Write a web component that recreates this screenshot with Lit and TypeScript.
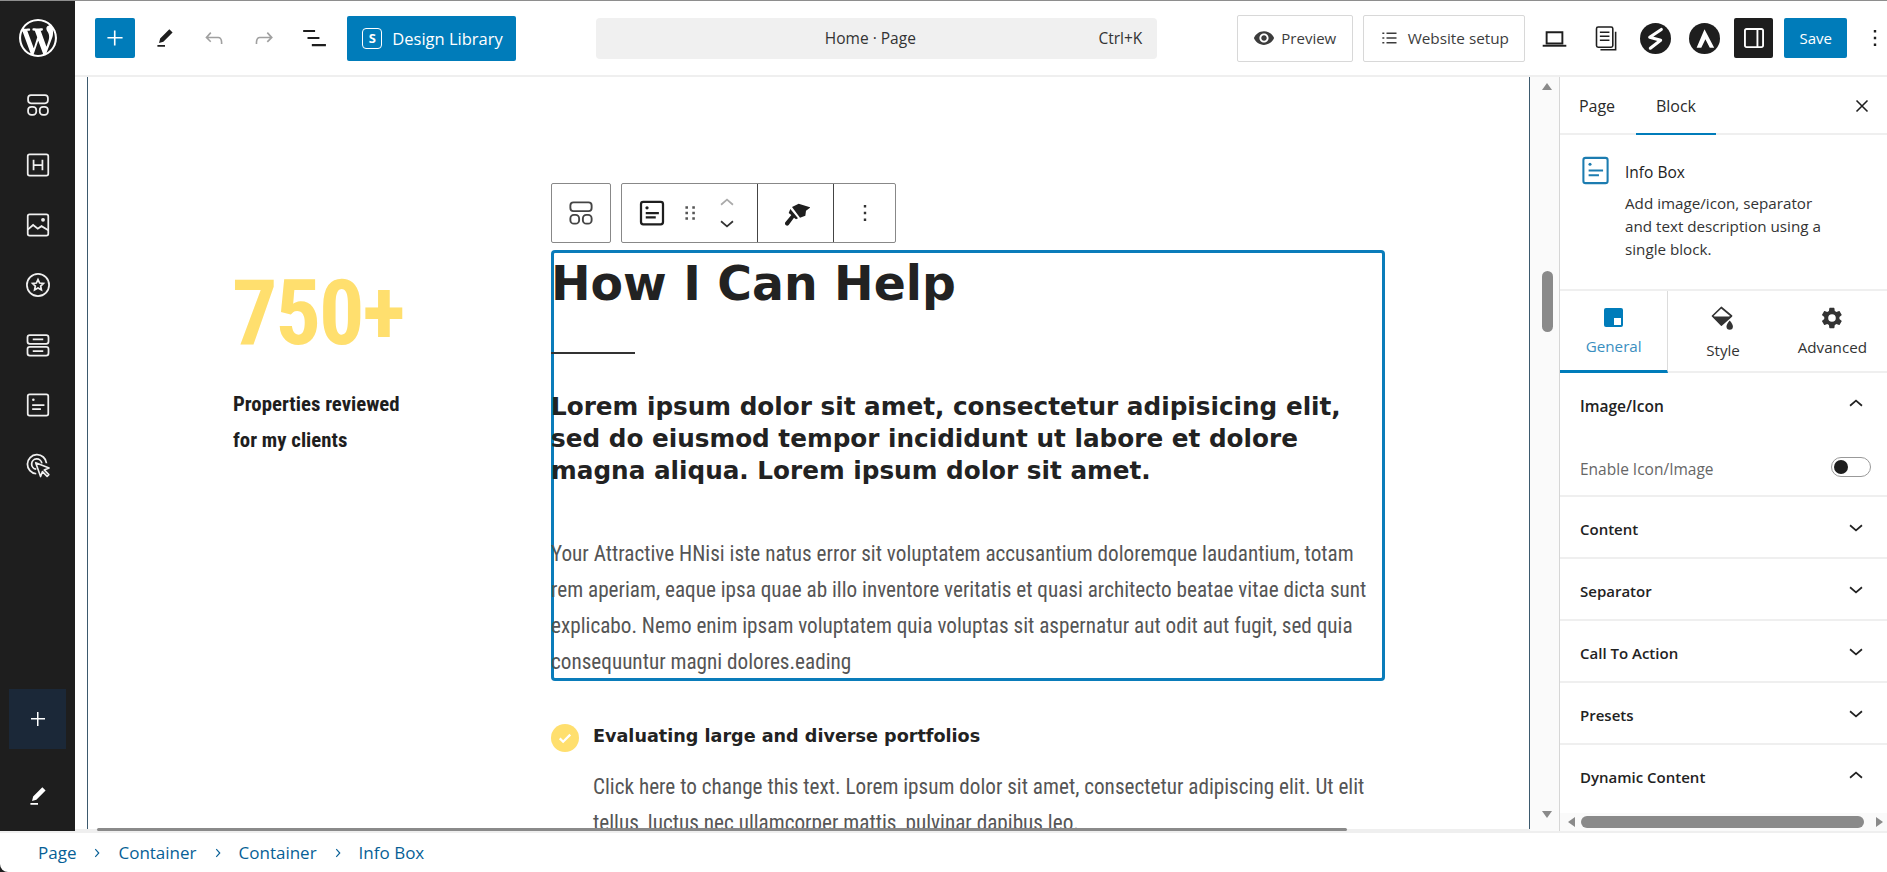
import { LitElement, html, css, svg } from "lit";
import { customElement } from "lit/decorators.js";

const ic = (size: number, content: unknown, vb = "0 0 24 24") =>
  html`<svg width=${size} height=${size} viewBox=${vb} fill="currentColor" aria-hidden="true">${content}</svg>`;

const WP = "M20 10c0-5.51-4.49-10-10-10C4.48 0 0 4.49 0 10c0 5.52 4.48 10 10 10 5.51 0 10-4.48 10-10zM7.78 15.37L4.37 6.22c.55-.02 1.17-.08 1.17-.08.5-.06.44-1.13-.06-1.11 0 0-1.45.11-2.37.11-.18 0-.37 0-.58-.01C4.12 2.69 6.87 1.11 10 1.11c2.33 0 4.45.87 6.05 2.34-.68-.11-1.65.39-1.65 1.58 0 .74.45 1.36.9 2.1.35.61.55 1.36.55 2.46 0 1.49-1.4 5-1.4 5l-3.03-8.37c.54-.02.82-.17.82-.17.5-.05.44-1.25-.06-1.22 0 0-1.44.12-2.38.12-.87 0-2.33-.12-2.33-.12-.5-.03-.56 1.2-.06 1.22l.92.08 1.26 3.41zM17.41 10c.24-.64.74-1.87.43-4.25.7 1.29 1.05 2.71 1.05 4.25 0 3.29-1.73 6.24-4.4 7.78.97-2.59 1.94-5.2 2.92-7.78zM6.1 18.09C3.12 16.65 1.11 13.53 1.11 10c0-1.3.23-2.48.72-3.59C3.25 10.3 4.67 14.2 6.1 18.09zm4.03-6.63l2.58 6.98c-.86.29-1.76.45-2.71.45-.79 0-1.57-.11-2.29-.33.81-2.38 1.62-4.74 2.42-7.1z";
const PLUS = svg`<path d="M11 12.5V19H12.5V12.5H19V11H12.5V5H11V11H5V12.5H11Z"/>`;
const PEN = svg`<path d="m19 7-3-3-8.5 8.5-1 4 4-1L19 7Zm-7 11.5H5V20h7v-1.5Z"/>`;
const UNDO = svg`<path d="M18.3 11.7c-.6-.6-1.4-.9-2.3-.9H6.7l2.9-3.3-1.1-1-4.5 5L8.5 16l1-1-2.7-2.7H16c.5 0 .9.2 1.3.5 1 1 1 3.4 1 4.5v.3h1.5v-.2c0-1.5 0-4.3-1.5-5.7z"/>`;
const REDO = svg`<path d="M15.6 6.5l-1.1 1 2.9 3.3H8c-.9 0-1.7.3-2.3.9-1.4 1.5-1.4 4.2-1.4 5.6v.2h1.5v-.3c0-1.1 0-3.5 1-4.5.3-.3.7-.5 1.3-.5h9.2L14.5 15l1.1 1.1 4.6-4.6-4.6-5z"/>`;
const LISTVIEW = svg`<path d="M2 5h11v2H2V5Zm4 6.5h11v2H6v-2ZM23 18H10v2h13v-2Z" transform="translate(0 -.5)"/>`;
const stroke = (c: unknown) => svg`<g fill="none" stroke="currentColor" stroke-width="1.5">${c}</g>`;
const CONTAINER = stroke(svg`<rect x="3.5" y="3.5" width="17" height="7" rx="2.5"/><rect x="3.5" y="13.5" width="7" height="7" rx="2.8"/><rect x="13.5" y="13.5" width="7" height="7" rx="2.8"/>`);
const HEADING = stroke(svg`<rect x="3.2" y="2.8" width="17.6" height="18.4" rx="1.6"/><path d="M8.2 7.5v9M15.8 7.5v9M8.2 12h7.6"/>`);
const IMAGE = stroke(svg`<rect x="3.2" y="2.8" width="17.6" height="18.4" rx="1.6"/><path d="M3.2 16l4.6-4 4 3.2 3.2-2.2 5.8 3.6"/><circle cx="16.3" cy="7.6" r=".9" fill="currentColor"/>`);
const STAR = stroke(svg`<circle cx="12" cy="12" r="9.5"/><path d="M12 7.4l1.4 2.9 3.2.4-2.3 2.2.6 3.2-2.9-1.5-2.9 1.5.6-3.2-2.3-2.2 3.2-.4z"/>`);
const ROWS = stroke(svg`<rect x="3" y="3.5" width="18" height="7.5" rx="2"/><rect x="3" y="13.5" width="18" height="7.5" rx="2"/><path d="M7.5 7.2h9M7.5 17.2h9"/>`);
const INFOBOX = stroke(svg`<rect x="3.2" y="2.8" width="17.6" height="18.4" rx="1.6"/><circle cx="8" cy="7.5" r="1.1" fill="currentColor" stroke="none"/><path d="M7 12h10.5M7 15.5h7.5"/>`);
const INFOBOX_B = svg`<g fill="none" stroke="currentColor" stroke-width="1.8"><rect x="3.2" y="3" width="17.6" height="18" rx="1.8"/><path d="M7 12h10.5M7 15.5h8"/></g><circle cx="8" cy="7.8" r="1.3"/>`;
const CLICK = svg`<g fill="none" stroke="currentColor" stroke-width="1.5"><path d="M10.5 19.5a8.2 8.2 0 1 1 8.8-9"/><path d="M10.5 15.6a4.4 4.4 0 1 1 4.8-5"/></g><path d="M10 10l11.5 4.6-4.2 1.6 4 4-1.5 1.5-4-4-1.6 4.2z" fill="#1e1e1e" stroke="currentColor" stroke-width="1.4" stroke-linejoin="round"/>`;
const DOTS = svg`<path d="M13.2 20h-2.4v-2.4h2.4V20zm0-6.8h-2.4v-2.4h2.4v2.4zm0-6.8h-2.4V4h2.4v2.4z"/>`;
const DRAG = svg`<path d="M7 4.5h2.8v2.8H7zM14.5 4.5h2.8v2.8h-2.8zM7 10.5h2.8v2.8H7zM14.5 10.5h2.8v2.8h-2.8zM7 16.5h2.8v2.8H7zM14.5 16.5h2.8v2.8h-2.8z"/>`;
const UP = svg`<path d="M5.5 15l6.500-5.500 6.500 5.500" fill="none" stroke="currentColor" stroke-width="1.9"/>`;
const DOWN = svg`<path d="M5.5 9l6.500 5.500L18.500 9" fill="none" stroke="currentColor" stroke-width="1.9"/>`;
const X = svg`<path d="M6 6l12 12M18 6L6 18" fill="none" stroke="currentColor" stroke-width="1.7"/>`;
const EYE = svg`<path d="M12 4.5C7 4.5 2.73 7.61 1 12c1.73 4.39 6 7.5 11 7.5s9.27-3.11 11-7.5c-1.73-4.39-6-7.5-11-7.5zM12 17c-2.76 0-5-2.24-5-5s2.24-5 5-5 5 2.24 5 5-2.24 5-5 5zm0-8c-1.66 0-3 1.34-3 3s1.34 3 3 3 3-1.34 3-3-1.34-3-3-3z"/>`;
const SETUP = svg`<path d="M9 5.5h12v1.6H9zM9 11.2h12v1.6H9zM9 16.9h12v1.6H9zM4 5.5h2.4v1.6H4zM4 11.2h2.4v1.6H4zM4 16.9h2.4v1.6H4z"/>`;
const LAPTOP = svg`<path d="M5 6.5h14v10H5z" fill="none" stroke="currentColor" stroke-width="1.7"/><path d="M1.5 17.6h21v1.7h-21z"/>`;
const PAGES = svg`<g fill="none" stroke="currentColor" stroke-width="1.4"><rect x="4" y="1.8" width="14.5" height="18" rx="1.5"/><path d="M7 6.5h8.5M7 10h8.5M7 13.5h8.5"/><path d="M21 6v16H7.5"/></g>`;
const PANEL = svg`<path d="M18 4H6c-1.1 0-2 .9-2 2v12c0 1.1.9 2 2 2h12c1.1 0 2-.9 2-2V6c0-1.1-.9-2-2-2zm-4 14.5H6c-.3 0-.5-.2-.5-.5V6c0-.3.2-.5.5-.5h8v13zm4.500-.5c0 .3-.2.5-.5.5h-2.500v-13H18c.3 0 .5.2.5.5v12z"/>`;
const SPECTRA = svg`<circle cx="12" cy="12" r="12"/><path d="M16.5 5L7.5 11l8.500 2.300L8 19.500" fill="none" stroke="#fff" stroke-width="2.400" stroke-linecap="round" stroke-linejoin="round"/>`;
const ASTRA = svg`<circle cx="12" cy="12" r="12"/><path d="M12 4.800l7.500 14.400h-3.400l-3.400-6.700-3.200 6.700H5.900z" fill="#fff"/>`;
const BRUSH = svg`<path d="M50 44L70 34l36 11-14 10-2 15-16 6z"/><path d="M45 50l23 28-6 3-6-5-16 22c-6 6-14-2-10-8l18-22-8-6z"/>`;
const DRIP = svg`<path d="M1.5 10L10.3 1.5 20.5 10 10.3 19z" fill="none" stroke="currentColor" stroke-width="1.7" stroke-linejoin="round"/><path d="M1.5 10.5h19L10.3 19z"/><path d="M18.7 14.5s-3.2 3.6-3.2 6a3.2 3.2 0 0 0 6.400 0c0-2.400-3.200-6-3.200-6z"/>`;
const GEAR = svg`<path d="M19.4 13c.04-.33.06-.66.06-1s-.02-.67-.06-1l2.150-1.680c.19-.15.24-.42.12-.64l-2.040-3.530c-.12-.22-.39-.3-.61-.22l-2.540 1.020c-.53-.4-1.100-.74-1.720-1L14.400 2.260A.5.5 0 0 0 13.900 1.840H9.820a.5.5 0 0 0-.5.42l-.38 2.700c-.62.26-1.190.6-1.720 1L4.680 4.940c-.23-.09-.49 0-.61.22L2.030 8.680c-.13.22-.07.49.12.64L4.300 11c-.04.33-.07.67-.07 1s.03.67.07 1l-2.150 1.680c-.19.15-.24.42-.12.64l2.040 3.530c.12.22.39.3.61.22l2.540-1.020c.53.4 1.100.74 1.720 1l.38 2.700c.04.24.25.42.5.42h4.080c.25 0 .46-.18.5-.42l.38-2.700c.62-.26 1.190-.6 1.720-1l2.540 1.020c.23.09.49 0 .61-.22l2.040-3.530c.12-.22.07-.49-.12-.64zM12 15.800a3.800 3.800 0 1 1 0-7.600 3.800 3.800 0 0 1 0 7.600z"/>`;
const CHEV = svg`<path d="M9 5.5l6 6.500-6 6.500" fill="none" stroke="currentColor" stroke-width="2"/>`;

const sideIcons = [CONTAINER, HEADING, IMAGE, STAR, ROWS, INFOBOX, CLICK];
const panels = [
  ["Content", false],
  ["Separator", false],
  ["Call To Action", false],
  ["Presets", false],
  ["Dynamic Content", true],
] as const;

@customElement("app-root")
export class AppRoot extends LitElement {
  static styles = css`
    :host { display: block; height: 872px; overflow: hidden; background: #fff; color: #1e1e1e;
      font-family: "Open Sans", "Noto Sans", sans-serif; font-size: 15px; }
    * { box-sizing: border-box; }
    svg { display: block; flex: none; }
    .shell { display: flex; flex-direction: column; height: 100%; border-top: 1px solid #8e8e8e; background: #1e1e1e; }
    .work { display: flex; height: 830px; }

    .side { width: 75px; flex: none; background: #1e1e1e; color: #f0f0f0; display: flex; flex-direction: column; align-items: center; border-top-left-radius: 6px; }
    .logo { height: 74px; display: flex; align-items: center; justify-content: center; color: #fff; }
    .side-item { height: 60px; display: flex; align-items: center; justify-content: center; }
    .side-add { margin-top: auto; width: 57px; height: 60px; background: #1b2838; display: flex; align-items: center; justify-content: center; color: #fff; }
    .side-pen { height: 82px; padding-top: 12px; display: flex; align-items: center; justify-content: center; color: #fff; }

    .main { flex: 1; min-width: 0; display: flex; flex-direction: column; background: #fff; }
    .top { height: 76px; flex: none; border-bottom: 2px solid #efefef; display: flex; align-items: center; padding-left: 20px; }
    .btn-add { width: 40px; height: 40px; background: #007cba; color: #fff; border-radius: 2px; display: flex; align-items: center; justify-content: center; margin-right: 5px; }
    .tool { width: 50px; display: flex; justify-content: center; color: #1e1e1e; }
    .tool.off { color: #a0a0a0; }
    .dl { margin-left: 9px; width: 170px; height: 45px; background: #007cba; color: #fff; border-radius: 2px; display: flex; align-items: center; padding-left: 15px; gap: 10px; font-size: 16.5px; }
    .dl-s { width: 20px; height: 21px; border: 1.5px solid #fff; border-radius: 4px; font-size: 13px; font-weight: 700; display: flex; align-items: center; justify-content: center; }
    .search { margin-left: 80px; width: 565px; height: 41px; background: #f0f0f0; border-radius: 4px; display: flex; align-items: center; font-size: 15.5px; color: #333; }
    .search-title { flex: 1; text-align: center; padding-left: 46px; }
    .search-key { padding-right: 15px; font-size: 15.5px; }
    .outline { height: 47px; border: 1px solid #d8d8d8; border-radius: 2px; display: flex; align-items: center; gap: 6px; font-size: 15px; color: #3c3c3c; }
    .preview { margin-left: 80px; width: 116px; padding-left: 15px; }
    .setup { margin-left: 10px; width: 163px; padding-left: 15px; gap: 9px; font-size: 15.3px; }
    .setup-t { white-space: nowrap; }
    .lap { margin-left: 14px; width: 32px; display: flex; justify-content: center; }
    .pg { margin-left: 19px; width: 32px; display: flex; justify-content: center; }
    .circle { margin-left: 18px; width: 32px; display: flex; justify-content: center; }
    .panel { margin-left: 13px; width: 40px; height: 40px; background: #1e1e1e; color: #fff; border-radius: 2px; display: flex; align-items: center; justify-content: center; }
    .save { margin-left: 11px; width: 63px; height: 40px; background: #007cba; color: #fff; border-radius: 2px; display: flex; align-items: center; justify-content: center; font-size: 15px; }
    .more { margin-left: 16px; width: 24px; flex: none; color: #1e1e1e; }

    .body { flex: 1; min-height: 0; display: flex; position: relative; }
    .canvas { flex: 1; min-width: 0; display: flex; padding-left: 12px; position: relative; }
    .frame { width: 1443px; border-left: 1px solid #3d5a6e; border-right: 1px solid #3d5a6e; overflow: hidden; padding: 173px 0 0 144px; display: flex; margin-bottom: 2px; }
    .stat { width: 319px; flex: none; padding-top: 16px; font-family: "Roboto Condensed", Roboto, sans-serif; font-stretch: 75%; }
    .num { font-size: 90px; font-weight: 700; color: #ffdf6e; line-height: 96px; letter-spacing: -2px; }
    .lbl { margin: 24px 0 0 1px; font-size: 20.8px; font-weight: 700; line-height: 36px; color: #1e1e1e; white-space: nowrap; }
    .col { width: 834px; flex: none; }
    .block { position: relative; height: 431px; box-shadow: inset 0 0 0 3px #0a7cba; border-radius: 4px; padding-top: 4px; }
    .tb { position: absolute; left: 0; top: -67px; display: flex; gap: 10px; height: 60px; color: #1e1e1e; }
    .tb-g { border: 1px solid #888; border-radius: 2px; background: #fff; display: flex; height: 60px; align-items: stretch; }
    .tb-s { width: 60px; align-items: center; justify-content: center; color: #444; }
    .tb-a { width: 136px; display: flex; align-items: center; padding-left: 15px; border-right: 1px solid #444; }
    .tb-drag { margin-left: 12px; color: #555; }
    .tb-mv { display: flex; flex-direction: column; margin-left: 15px; color: #333; }
    .tb-mv .u { color: #aaa; }
    .tb-b { width: 76px; display: flex; align-items: center; justify-content: center; border-right: 1px solid #444; }
    .tb-d { width: 61px; display: flex; align-items: center; justify-content: center; color: #333; }
    .h1 { font-family: "DejaVu Sans", sans-serif; font-weight: 700; font-size: 47.3px; line-height: 60px; margin: 0; color: #222; white-space: nowrap; }
    .sep { width: 84px; height: 2px; background: #333; margin: 38px 0 0; }
    .sub { margin: 37px 0 0; font-family: "DejaVu Sans", sans-serif; font-weight: 700; font-size: 24.7px; line-height: 32px; color: #222; }
    .txt { margin: 49px 0 0; padding-right: 8px; font-family: "Roboto Condensed", Roboto, sans-serif; font-stretch: 75%; font-size: 21.2px; line-height: 36px; color: #555; }
    .item { display: flex; align-items: flex-start; margin-top: 42px; }
    .check { width: 28px; height: 28px; flex: none; border-radius: 50%; background: #ffdf6e; color: #fff; display: flex; align-items: center; justify-content: center; margin-top: 1px; }
    .item-t { margin: 1px 0 0 14px; font-family: "DejaVu Sans", sans-serif; font-weight: 700; font-size: 17.6px; line-height: 24px; color: #222; white-space: nowrap; }
    .item-p { margin: 17px 0 0 42px; font-family: "Roboto Condensed", Roboto, sans-serif; font-stretch: 75%; font-size: 21.2px; line-height: 36px; color: #555; }

    .hscroll { position: absolute; left: 0; right: 0; bottom: 0; height: 2px; background: #efefef; }
    .hthumb { position: absolute; left: 22px; top: -1px; width: 1250px; height: 3px; background: #8a8a8a; border-radius: 2px; }
    .vbar { width: 29px; flex: none; background: #fafafa; display: flex; flex-direction: column; align-items: center; padding-left: 5px; }
    .arrow-u { margin-top: 6px; width: 0; height: 0; border: 5px solid transparent; border-top: 0; border-bottom: 7px solid #8a8a8a; }
    .vthumb { margin-top: 181px; width: 11px; height: 61px; background: #8a8a8a; border-radius: 6px; }
    .arrow-d { margin-top: auto; margin-bottom: 13px; width: 0; height: 0; border: 5px solid transparent; border-bottom: 0; border-top: 7px solid #8a8a8a; }

    .insp { width: 328px; flex: none; border-left: 1px solid #d6d6d6; display: flex; flex-direction: column; position: relative; background: #fff; }
    .insp-tabs { height: 58px; flex: none; display: flex; align-items: stretch; border-bottom: 2px solid #efefef; padding-left: 7px; font-size: 16px; }
    .insp-tab { width: 60px; margin-right: 9px; text-align: center; line-height: 58px; color: #2a2a2a; }
    .insp-tab.on { width: 80px; margin-right: 0; height: 58px; border-bottom: 2px solid #007cba; }
    .insp-x { margin-left: auto; margin-right: 14px; margin-top: 18px; }
    .card { height: 156px; flex: none; display: flex; border-bottom: 2px solid #efefef; padding: 19px 0 0 19px; gap: 13px; }
    .card-i { color: #1c7cb0; }
    .card-b { margin-top: 5px; }
    .card-t { font-size: 15.5px; font-weight: 500; line-height: 26px; color: #222; }
    .card-d { font-size: 15.2px; line-height: 23px; margin-top: 7px; color: #333; width: 215px; }
    .ptabs { height: 82px; flex: none; display: flex; border-bottom: 2px solid #efefef; }
    .ptab { width: 113px; display: flex; flex-direction: column; align-items: center; padding-top: 15px; font-size: 15.2px; color: #333; }
    .ptab.on { width: 112px; color: #3a8fbf; border-right: 1px solid #dcdcdc; border-bottom: 3px solid #007cba; height: 82px; }
    .ptab span { margin-top: 7px; line-height: 20px; }
    .ptab.st span { margin-top: 10px; }
    .gen { width: 19px; height: 19px; border-radius: 2px; background: #007cba; display: flex; justify-content: flex-end; align-items: flex-end; padding: 0 2px 2px 0; margin: 2px 0; }
    .gen i { display: block; width: 7px; height: 7px; background: #fff; }
    .sect { padding: 3px 20px 0 20px; height: 62px; flex: none; display: flex; align-items: center; justify-content: space-between; border-bottom: 2px solid #efefef; font-size: 15px; font-weight: 600; color: #222; }
    .sect svg { margin-top: -1px; }
    .sect.open { border: 0; font-size: 15.5px; padding-top: 3px; }
    .sect.last { border: 0; padding-top: 2px; }
    .sect.open svg, .sect.last svg { margin-top: -5px; }
    .row { height: 62px; flex: none; padding: 4px 16px 0 20px; display: flex; align-items: center; justify-content: space-between; border-bottom: 2px solid #efefef; font-size: 15.5px; color: #666; }
    .row span { margin-top: 3px; }
    .toggle { width: 40px; height: 20px; border: 1px solid #999; border-radius: 10px; padding: 2px; }
    .toggle i { display: block; width: 14px; height: 14px; border-radius: 50%; background: #1e1e1e; }
    .hbar { position: absolute; left: 0; right: 0; bottom: 0; height: 18px; background: #fafafa; display: flex; align-items: center; padding-left: 8px; gap: 6px; }
    .al { width: 0; height: 0; border: 5px solid transparent; border-left: 0; border-right: 7px solid #8a8a8a; }
    .ar { width: 0; height: 0; border: 5px solid transparent; border-right: 0; border-left: 7px solid #8a8a8a; margin-left: 6px; }
    .bthumb { width: 283px; height: 12px; background: #8a8a8a; border-radius: 6px; }

    .crumbs { flex: 1; background: #fff; border-top: 2px solid #efefef; border-bottom-left-radius: 8px; display: flex; align-items: center; padding-left: 38px; color: #075f96; font-size: 17px; }
    .crumbs svg { margin: 0 14px; color: #075f96; }
  `;

  render() {
    return html`<div class="shell">
      <div class="work">
        <nav class="side">
          <div class="logo">${ic(38, svg`<path d=${WP}/>`, "0 0 20 20")}</div>
          ${sideIcons.map((i) => html`<div class="side-item">${ic(28, i)}</div>`)}
          <div class="side-add">${ic(24, PLUS)}</div>
          <div class="side-pen">${ic(26, PEN)}</div>
        </nav>
        <div class="main">
          <header class="top">
            <div class="btn-add">${ic(26, PLUS)}</div>
            <div class="tool">${ic(26, PEN)}</div>
            <div class="tool off">${ic(26, UNDO)}</div>
            <div class="tool off">${ic(26, REDO)}</div>
            <div class="tool">${ic(26, LISTVIEW)}</div>
            <div class="dl"><div class="dl-s">S</div>Design Library</div>
            <div class="search"><span class="search-title">Home · Page</span><span class="search-key">Ctrl+K</span></div>
            <div class="outline preview">${ic(22, EYE)}Preview</div>
            <div class="outline setup">${ic(20, SETUP)}<span class="setup-t">Website setup</span></div>
            <div class="lap">${ic(27, LAPTOP)}</div>
            <div class="pg">${ic(27, PAGES)}</div>
            <div class="circle">${ic(31, SPECTRA)}</div>
            <div class="circle">${ic(31, ASTRA)}</div>
            <div class="panel">${ic(30, PANEL)}</div>
            <div class="save">Save</div>
            <div class="more">${ic(24, DOTS)}</div>
          </header>
          <div class="body">
            <section class="canvas">
              <div class="frame">
                <div class="stat">
                  <div class="num">750+</div>
                  <div class="lbl">Properties reviewed<br />for my clients</div>
                </div>
                <div class="col">
                  <div class="block">
                    <div class="tb">
                      <div class="tb-g tb-s">${ic(30, CONTAINER)}</div>
                      <div class="tb-g">
                        <div class="tb-a">
                          ${ic(30, INFOBOX_B)}
                          <span class="tb-drag">${ic(22, DRAG)}</span>
                          <span class="tb-mv"><span class="u">${ic(22, UP)}</span>${ic(22, DOWN)}</span>
                        </div>
                        <div class="tb-b">${ic(28, BRUSH, "20 20 84 84")}</div>
                        <div class="tb-d">${ic(24, DOTS)}</div>
                      </div>
                    </div>
                    <h1 class="h1">How I Can Help</h1>
                    <div class="sep"></div>
                    <p class="sub">Lorem ipsum dolor sit amet, consectetur adipisicing elit, sed do eiusmod tempor incididunt ut labore et dolore magna aliqua. Lorem ipsum dolor sit amet.</p>
                    <p class="txt">Your Attractive HNisi iste natus error sit voluptatem accusantium doloremque laudantium, totam rem aperiam, eaque ipsa quae ab illo inventore veritatis et quasi architecto beatae vitae dicta sunt explicabo. Nemo enim ipsam voluptatem quia voluptas sit aspernatur aut odit aut fugit, sed quia consequuntur magni dolores.eading</p>
                  </div>
                  <div class="item">
                    <div class="check">${ic(18, svg`<path d="M5 12.5l4.5 4.500L19 7.500" fill="none" stroke="currentColor" stroke-width="3"/>`)}</div>
                    <div class="item-t">Evaluating large and diverse portfolios</div>
                  </div>
                  <p class="item-p">Click here to change this text. Lorem ipsum dolor sit amet, consectetur adipiscing elit. Ut elit tellus, luctus nec ullamcorper mattis, pulvinar dapibus leo.</p>
                </div>
              </div>
              <div class="hscroll"><div class="hthumb"></div></div>
            </section>
            <div class="vbar"><i class="arrow-u"></i><i class="vthumb"></i><i class="arrow-d"></i></div>
            <aside class="insp">
              <div class="insp-tabs">
                <div class="insp-tab">Page</div>
                <div class="insp-tab on">Block</div>
                <div class="insp-x">${ic(22, X)}</div>
              </div>
              <div class="card">
                <div class="card-i">${ic(33, INFOBOX)}</div>
                <div class="card-b">
                  <div class="card-t">Info Box</div>
                  <div class="card-d">Add image/icon, separator and text description using a single block.</div>
                </div>
              </div>
              <div class="ptabs">
                <div class="ptab on"><div class="gen"><i></i></div><span>General</span></div>
                <div class="ptab st">${ic(24, DRIP)}<span>Style</span></div>
                <div class="ptab">${ic(24, GEAR)}<span>Advanced</span></div>
              </div>
              <div class="sect open">Image/Icon ${ic(22, UP)}</div>
              <div class="row"><span>Enable Icon/Image</span><div class="toggle"><i></i></div></div>
              ${panels.map(([t, open], n) => html`<div class="sect ${n === panels.length - 1 ? "last" : ""}">${t} ${ic(22, open ? UP : DOWN)}</div>`)}
              <div class="hbar"><i class="al"></i><i class="bthumb"></i><i class="ar"></i></div>
            </aside>
          </div>
        </div>
      </div>
      <footer class="crumbs">
        Page ${ic(14, CHEV)}
        Container ${ic(14, CHEV)}
        Container ${ic(14, CHEV)}
        Info Box
      </footer>
    </div>`;
  }
}
